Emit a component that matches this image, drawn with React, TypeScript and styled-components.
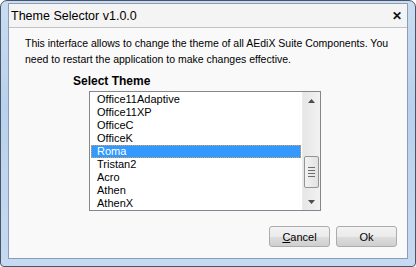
import React from "react"
import styled, { createGlobalStyle } from "styled-components"

const Global = createGlobalStyle`
  html, body {
    margin: 0;
    padding: 0;
    background: #ffffff;
  }
  body {
    font-family: "Liberation Sans", Arial, sans-serif;
  }
`

const Window = styled.div`
  box-sizing: border-box;
  width: 416px;
  height: 267px;
  padding: 2px 7px 7px 7px;
  border: 1px solid #4a5564;
  border-radius: 7px 7px 4px 4px;
  background: linear-gradient(180deg, #c9dcf2 0%, #b9d1ee 40%, #c6daf1 100%);
  display: flex;
  overflow: hidden;
`

const Inner = styled.div`
  flex: 1;
  display: flex;
  flex-direction: column;
  border: 1px solid #8c9eb6;
  background: #f9f9f9;
`

const TitleBar = styled.div`
  height: 23px;
  display: flex;
  align-items: center;
  justify-content: space-between;
  padding: 0 5px 0 2px;
  background: #f4f4f4;
  border-bottom: 1px solid #c4c4c4;
`

const Title = styled.span`
  font-size: 12.5px;
  color: #000000;
`

const Close = styled.span`
  font-size: 12px;
  font-weight: bold;
  color: #111111;
`

const Body = styled.div`
  flex: 1;
  display: flex;
  flex-direction: column;
  padding: 7px 10px 0 16px;
`

const Intro = styled.p`
  margin: 0;
  font-size: 10.5px;
  line-height: 16px;
  color: #000000;
`

const Label = styled.div`
  margin: 8px 0 0 48px;
  font-size: 12px;
  font-weight: bold;
  line-height: 13px;
`

const ListBox = styled.div`
  margin: 3px 0 0 64px;
  width: 232px;
  height: 120px;
  box-sizing: border-box;
  border: 1px solid #828790;
  background: #ffffff;
  display: flex;
`

const Items = styled.div`
  flex: 1;
  padding: 1px 1px 0 1px;
  overflow: hidden;
`

const Item = styled.div<{ $selected?: boolean }>`
  height: 13px;
  line-height: 13px;
  font-size: 11px;
  padding-left: 5px;
  box-sizing: border-box;
  color: ${(p) => (p.$selected ? "#ffffff" : "#000000")};
  background: ${(p) => (p.$selected ? "#3399ff" : "transparent")};
  border: 1px dotted ${(p) => (p.$selected ? "#e0a050" : "transparent")};
  display: flex;
  align-items: center;
`

const ScrollBar = styled.div`
  width: 17px;
  display: flex;
  flex-direction: column;
  background: linear-gradient(90deg, #e6e6e6, #f2f2f2);
  border-left: 1px solid #ececec;
`

const Arrow = styled.div`
  height: 17px;
  display: flex;
  align-items: center;
  justify-content: center;
`

const Track = styled.div`
  flex: 1;
  display: flex;
  flex-direction: column;
  justify-content: flex-start;
  padding-top: 47px;
`

const Thumb = styled.div`
  height: 30px;
  margin: 0 1px;
  border: 1px solid #959595;
  border-radius: 2px;
  background: linear-gradient(90deg, #f2f2f2, #e2e2e2);
  display: flex;
  flex-direction: column;
  align-items: center;
  justify-content: center;
  gap: 2px;
`

const Grip = styled.div`
  width: 7px;
  height: 1px;
  background: #6e6e6e;
`

const Footer = styled.div`
  margin-top: auto;
  display: flex;
  justify-content: flex-end;
  gap: 6px;
  padding: 0 0 11px 0;
`

const Button = styled.button`
  width: 61px;
  height: 21px;
  border: 1px solid #acacac;
  border-radius: 3px;
  background: linear-gradient(180deg, #f3f3f3 0%, #ebebeb 50%, #dddddd 51%, #cfcfcf 100%);
  font-family: "Liberation Sans", Arial, sans-serif;
  font-size: 11px;
  color: #000000;
  padding: 0;
`

const themes = [
  "Office11Adaptive",
  "Office11XP",
  "OfficeC",
  "OfficeK",
  "Roma",
  "Tristan2",
  "Acro",
  "Athen",
  "AthenX",
]

const App = () => {
  return (
    <>
      <Global />
      <Window>
        <Inner>
          <TitleBar>
            <Title>Theme Selector v1.0.0</Title>
            <Close>✕</Close>
          </TitleBar>
          <Body>
            <Intro>
              This interface allows to change the theme of all AEdiX Suite Components. You
              need to restart the application to make changes effective.
            </Intro>
            <Label>Select Theme</Label>
            <ListBox>
              <Items>
                {themes.map((t) => (
                  <Item key={t} $selected={t === "Roma"}>
                    {t}
                  </Item>
                ))}
              </Items>
              <ScrollBar>
                <Arrow>
                  <svg width="7" height="4" viewBox="0 0 7 4">
                    <path d="M0 4 L3.5 0 L7 4 Z" fill="#4d4d4d" />
                  </svg>
                </Arrow>
                <Track>
                  <Thumb>
                    <Grip />
                    <Grip />
                    <Grip />
                    <Grip />
                  </Thumb>
                </Track>
                <Arrow>
                  <svg width="7" height="4" viewBox="0 0 7 4">
                    <path d="M0 0 L3.5 4 L7 0 Z" fill="#4d4d4d" />
                  </svg>
                </Arrow>
              </ScrollBar>
            </ListBox>
            <Footer>
              <Button>
                <u>C</u>ancel
              </Button>
              <Button>Ok</Button>
            </Footer>
          </Body>
        </Inner>
      </Window>
    </>
  )
}

export default App
